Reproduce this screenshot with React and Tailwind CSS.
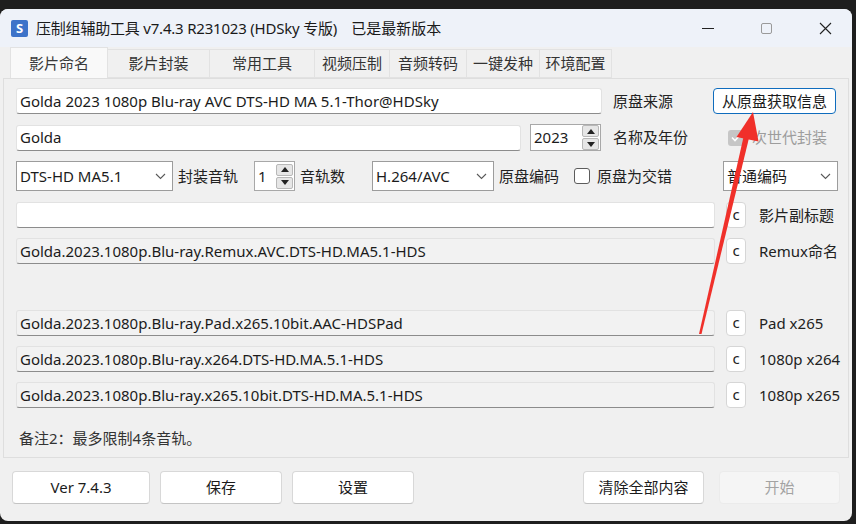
import React from "react";

const FONT = { fontFamily: '"Noto Sans", "Noto Sans CJK SC", sans-serif' };

function TextBox({ value, width, readOnly }) {
  return (
    <div
      className={`h-[26px] flex items-center px-[3px] rounded-[3px] border border-[#e2e2e2] border-b-[#8c8c8c] text-[15px] text-[#1b1b1b] whitespace-nowrap overflow-hidden ${
        readOnly ? "bg-[#f2f2f2]" : "bg-white"
      }`}
      style={{ width }}
    >
      {value}
    </div>
  );
}

function Chevron() {
  return (
    <svg width="11" height="7" viewBox="0 0 11 7" className="shrink-0">
      <polyline points="1,1 5.5,5.5 10,1" fill="none" stroke="#5a5a5a" strokeWidth="1.1" />
    </svg>
  );
}

function Select({ value, width }) {
  return (
    <div
      className="h-[30px] flex items-center justify-between pl-[3px] pr-[6px] bg-white border border-[#9c9c9c] text-[15px] text-[#1b1b1b] whitespace-nowrap"
      style={{ width }}
    >
      <span>{value}</span>
      <Chevron />
    </div>
  );
}

function Spinner({ value, width, height }) {
  return (
    <div
      className="flex items-center bg-white border border-[#a8a8a8] text-[15px] text-[#1b1b1b] pl-[3px] pr-[1px]"
      style={{ width, height }}
    >
      <span className="flex-1">{value}</span>
      <div className="flex flex-col gap-[1px] w-[17px]">
        <div className="h-[12px] bg-[#e6e6e6] border border-[#b8b8b8] rounded-[2px] flex items-center justify-center">
          <svg width="8" height="5" viewBox="0 0 8 5"><polygon points="4,0 8,5 0,5" fill="#222" /></svg>
        </div>
        <div className="h-[12px] bg-[#e6e6e6] border border-[#b8b8b8] rounded-[2px] flex items-center justify-center">
          <svg width="8" height="5" viewBox="0 0 8 5"><polygon points="0,0 8,0 4,5" fill="#222" /></svg>
        </div>
      </div>
    </div>
  );
}

function CopyRow({ value, label, readOnly, className = "" }) {
  return (
    <div className={`flex items-center ${className}`}>
      <TextBox value={value} width={699} readOnly={readOnly} />
      <div className="ml-[11px] w-[20px] h-[26px] bg-white border border-[#d6d6d6] rounded-[4px] flex items-center justify-center text-[15px] text-[#222] leading-none pb-[2px]">
        c
      </div>
      <span className="ml-[13px] text-[15px] text-[#222] whitespace-nowrap">{label}</span>
    </div>
  );
}

function Button({ children, width, disabled, className = "" }) {
  return (
    <div
      className={`h-[33px] flex items-center justify-center rounded-[4px] border text-[15px] ${
        disabled
          ? "bg-[#f5f5f5] border-[#ebebeb] text-[#a3a3a3]"
          : "bg-white border-[#d8d8d8] border-b-[#c4c4c4] text-[#1b1b1b]"
      } ${className}`}
      style={{ width }}
    >
      {children}
    </div>
  );
}

const tabs = [
  ["影片命名", 98],
  ["影片封装", 102],
  ["常用工具", 105],
  ["视频压制", 75],
  ["音频转码", 77],
  ["一键发种", 73],
  ["环境配置", 72],
];

export default function App() {
  return (
    <div className="w-[856px] h-[524px] bg-[#1e1e1e] overflow-hidden" style={FONT}>
      <div className="relative mt-[9px] w-[852px] h-[512px] rounded-[8px] bg-[#f0f0f0] overflow-hidden flex flex-col">
        {/* title bar */}
        <div className="h-[38px] shrink-0 bg-[#eef2f9] flex items-center">
          <div className="ml-[11px] w-[17px] h-[17px] rounded-[2px] bg-[#3d73c9] flex items-center justify-center text-white text-[13px] font-bold leading-none">
            S
          </div>
          <span className="ml-[8px] text-[15px] text-[#1a1a1a] whitespace-nowrap tracking-[-0.2px]">
            压制组辅助工具 v7.4.3 R231023 (HDSky 专版)
          </span>
          <span className="ml-[14px] text-[15px] text-[#1a1a1a]">已是最新版本</span>
          <div className="ml-auto flex items-center">
            <div className="w-[12px] h-[1px] bg-[#222] mr-[47px]" />
            <div className="w-[11px] h-[11px] border border-[#9a9a9a] rounded-[2px] mr-[47px]" />
            <svg width="13" height="13" viewBox="0 0 13 13" className="mr-[20px]">
              <path d="M1 1 L12 12 M12 1 L1 12" stroke="#222" strokeWidth="1.1" />
            </svg>
          </div>
        </div>

        {/* tabs */}
        <div className="h-[31px] shrink-0 flex items-end pl-[10px]">
          {tabs.map(([t, w], i) => (
            <div
              key={t}
              className={`flex items-center justify-center text-[15px] border border-[#e2e2e2] ${
                i === 0
                  ? "h-[31px] bg-[#f9f9f9] border-b-0 text-[#3a3a3a]"
                  : "h-[29px] bg-[#f0f0f0] border-l-0 text-[#333]"
              }`}
              style={{ width: w }}
            >
              {t}
            </div>
          ))}
        </div>

        {/* panel */}
        <div className="mx-[3px] h-[380px] shrink-0 border border-[#dedede] bg-[#f0f0f0] pl-[12px] pt-[9px]">
          <div className="flex items-center">
            <TextBox value="Golda 2023 1080p Blu-ray AVC DTS-HD MA 5.1-Thor@HDSky" width={586} />
            <span className="ml-[11px] w-[100px] text-[15px] text-[#222]">原盘来源</span>
            <div className="w-[123px] h-[26px] bg-white border border-[#0f6cbd] rounded-[4px] flex items-center justify-center text-[15px] text-[#1b1b1b]">
              从原盘获取信息
            </div>
          </div>

          <div className="flex items-center mt-[10px]">
            <TextBox value="Golda" width={505} />
            <div className="ml-[9px]">
              <Spinner value="2023" width={71} height={27} />
            </div>
            <span className="ml-[12px] w-[115px] text-[15px] text-[#222]">名称及年份</span>
            <div className="w-[16px] h-[16px] rounded-[3px] bg-[#c6c6c6] flex items-center justify-center">
              <svg width="11" height="9" viewBox="0 0 11 9">
                <polyline points="1,4.5 4,7.5 10,1" fill="none" stroke="white" strokeWidth="1.6" />
              </svg>
            </div>
            <span className="ml-[8px] text-[15px] text-[#9d9d9d]">次世代封装</span>
          </div>

          <div className="flex items-center mt-[10px]">
            <Select value="DTS-HD MA5.1" width={157} />
            <span className="ml-[5px] w-[76px] text-[15px] text-[#222]">封装音轨</span>
            <Spinner value="1" width={41} height={30} />
            <span className="ml-[5px] w-[72px] text-[15px] text-[#222]">音轨数</span>
            <Select value="H.264/AVC" width={122} />
            <span className="ml-[5px] w-[75px] text-[15px] text-[#222]">原盘编码</span>
            <div className="w-[16px] h-[16px] rounded-[3px] border border-[#5c5c5c] bg-white" />
            <span className="ml-[7px] w-[126px] text-[15px] text-[#222]">原盘为交错</span>
            <Select value="普通编码" width={115} />
          </div>

          <CopyRow value="" label="影片副标题" className="mt-[11px]" />
          <CopyRow
            value="Golda.2023.1080p.Blu-ray.Remux.AVC.DTS-HD.MA5.1-HDS"
            label="Remux命名"
            readOnly
            className="mt-[10px]"
          />
          <CopyRow
            value="Golda.2023.1080p.Blu-ray.Pad.x265.10bit.AAC-HDSPad"
            label="Pad x265"
            readOnly
            className="mt-[46px]"
          />
          <CopyRow
            value="Golda.2023.1080p.Blu-ray.x264.DTS-HD.MA.5.1-HDS"
            label="1080p x264"
            readOnly
            className="mt-[10px]"
          />
          <CopyRow
            value="Golda.2023.1080p.Blu-ray.x265.10bit.DTS-HD.MA.5.1-HDS"
            label="1080p x265"
            readOnly
            className="mt-[10px]"
          />

          <div className="mt-[19px] pl-[3px] text-[15px] text-[#333]">备注2：最多限制4条音轨。</div>
        </div>

        {/* bottom buttons */}
        <div className="flex items-start pt-[13px] pl-[12px]">
          <Button width={138}>Ver 7.4.3</Button>
          <Button width={122} className="ml-[10px]">保存</Button>
          <Button width={122} className="ml-[10px]">设置</Button>
          <Button width={121} className="ml-[169px]">清除全部内容</Button>
          <Button width={121} disabled className="ml-[15px]">开始</Button>
        </div>

        {/* annotation arrow */}
        <svg className="absolute left-0 top-0 pointer-events-none" width="852" height="512" viewBox="0 9 852 512">
          <polygon points="699,334 701.5,334 749,138 743.5,137" fill="#f0302a" />
          <polygon points="753,112 736.5,137 758.5,141.5" fill="#f0302a" />
        </svg>
      </div>
    </div>
  );
}
